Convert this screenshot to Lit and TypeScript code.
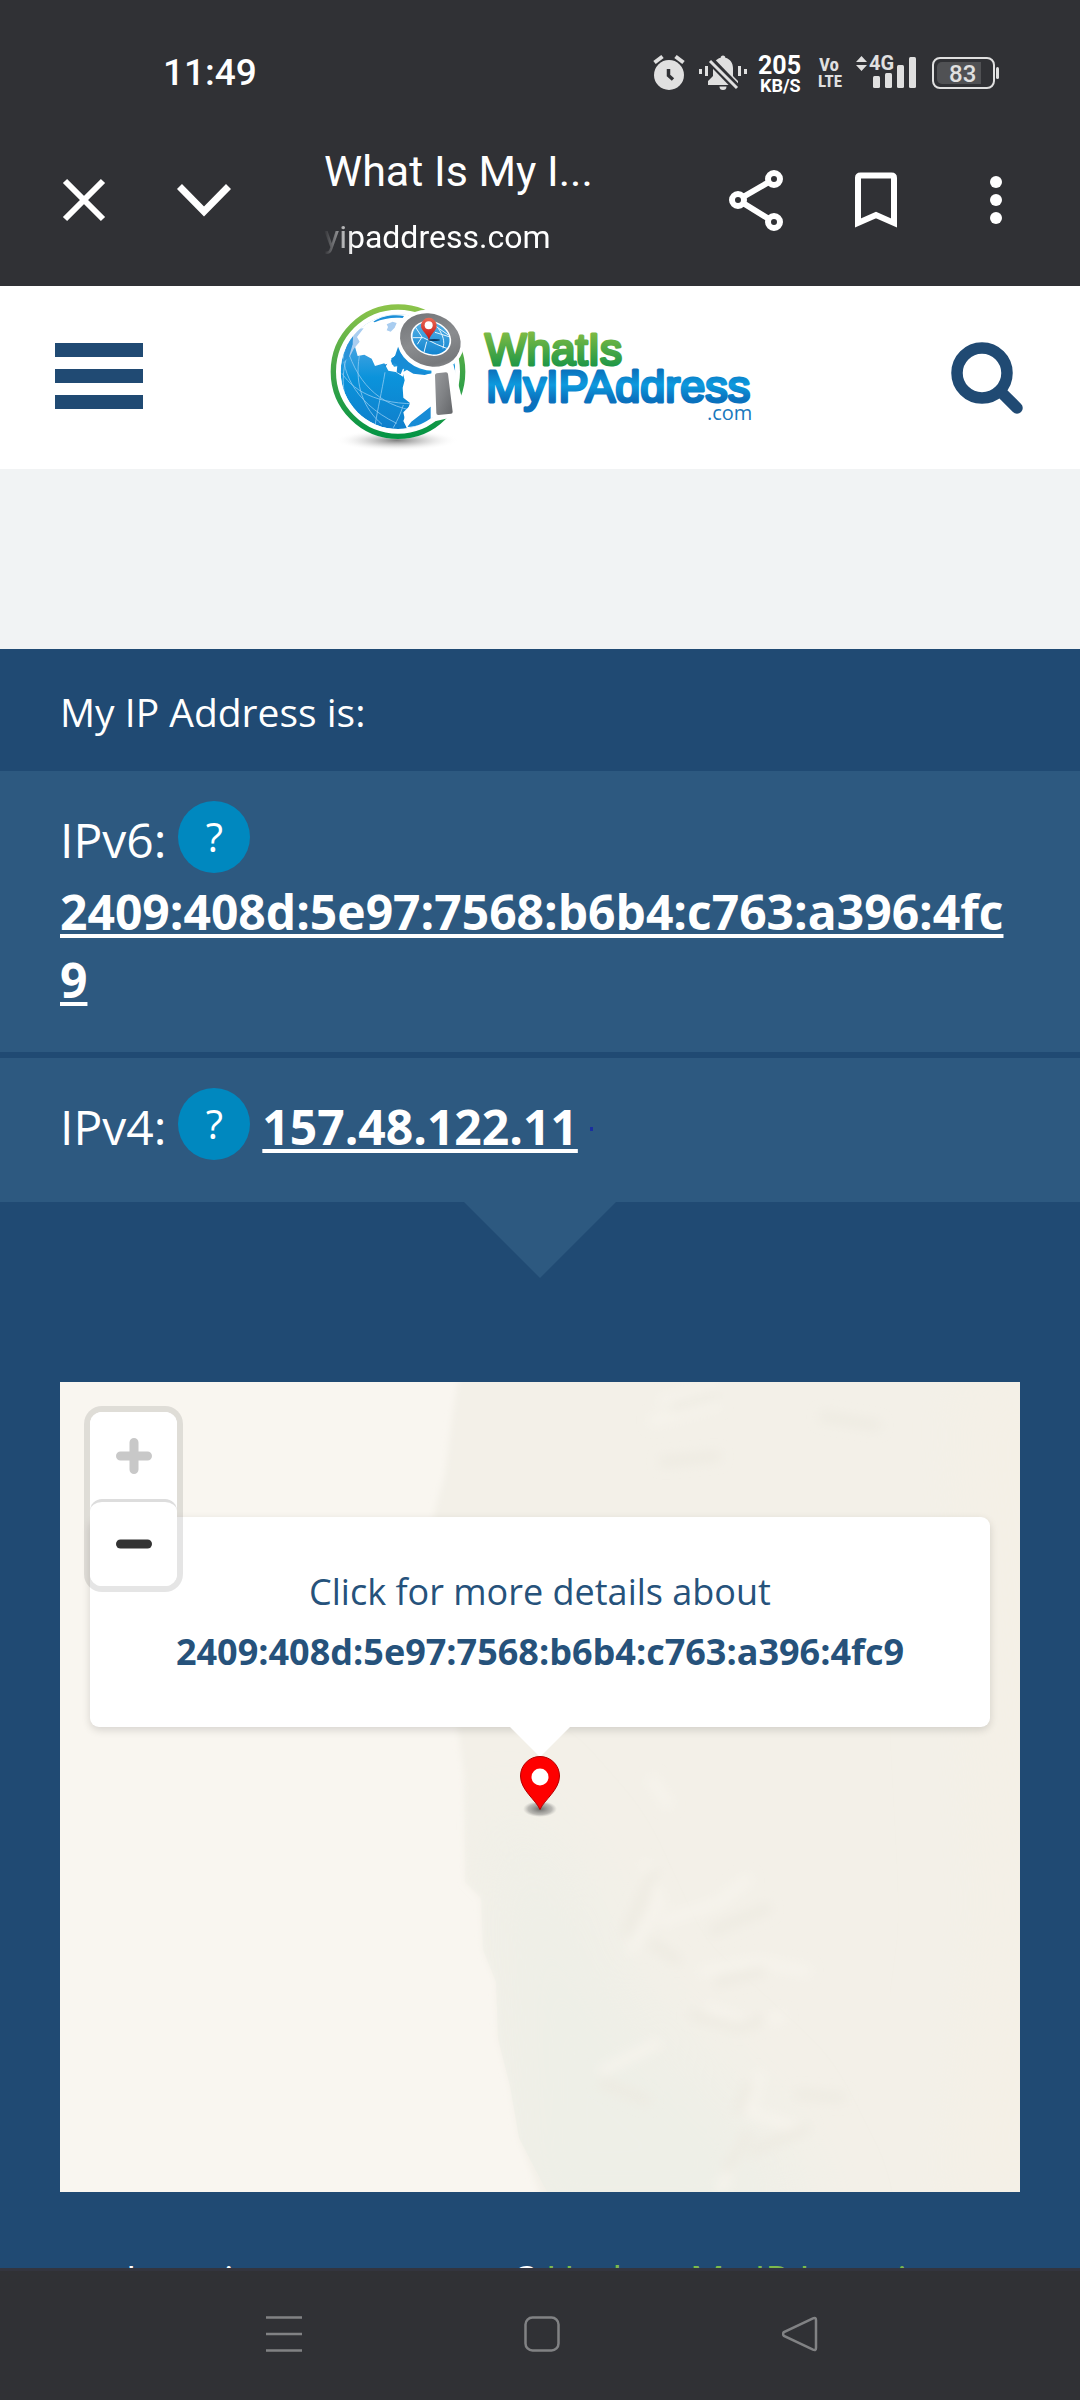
import { LitElement, html, svg, css } from "lit";
import { customElement } from "lit/decorators.js";

const IPV6 = "2409:408d:5e97:7568:b6b4:c763:a396:4fc9";
const IPV4 = "157.48.122.11";

@customElement("status-bar")
class StatusBar extends LitElement {
  static styles = css`
    :host {
      display: flex;
      align-items: flex-start;
      justify-content: space-between;
      box-sizing: border-box;
      height: 116px;
      padding: 52px 80px 0 163px;
      color: #fff;
      font-family: Roboto, sans-serif;
    }
    .time {
      font-size: 37px;
      font-weight: 500;
      line-height: 42px;
    }
    .icons {
      display: block;
      width: 348px;
      height: 48px;
    }
    .rate { font-weight: 700; font-size: 25px; }
    .unit { font-weight: 700; font-size: 18px; }
    .volte { font: 700 19px "Roboto Condensed", "Open Sans Condensed", Roboto, sans-serif; }
    .volte.small { font-size: 17px; }
    .net { font-weight: 700; font-size: 20px; }
    .level { font-weight: 500; font-size: 24px; }
  `;

  render() {
    return html`
      <span class="time">11:49</span>
      <svg class="icons" viewBox="652 52 348 48" fill="#e0e0e0">
        <circle cx="669" cy="75" r="15"></circle>
        <path d="M654.500 62.500l8-6M683.500 62.500l-8-6" stroke="#e0e0e0" stroke-width="4" fill="none"></path>
        <path d="M668.500 69v6.500l4.500 4" stroke="#303135" stroke-width="3.500" fill="none"></path>

        <path d="M723 55.500c1.500 0 2.300 1 2.300 2.200 5 1.300 7.700 5.300 7.700 10.300v8l5 5v4h-30v-4l5-5v-8c0-5 2.700-9 7.700-10.300 0-1.200.8-2.200 2.300-2.200z"></path>
        <path d="M719.500 86.500h7a3.500 3.500 0 0 1-7 0z"></path>
        <path d="M709 59l28 29" stroke="#303135" stroke-width="8"></path>
        <path d="M710 61l27 27" stroke="#e0e0e0" stroke-width="3"></path>
        <path d="M700.500 69v5M706.500 66v10M739.500 66v10M745.500 69v5" stroke="#e0e0e0" stroke-width="3"></path>

        <text class="rate" x="758" y="74" fill="#fff">205</text>
        <text class="unit" x="760" y="92" fill="#fff">KB/S</text>
        <text class="volte" x="819" y="71">Vo</text>
        <text class="volte small" x="818" y="87">LTE</text>

        <path d="M856 62l5.500-6 5.500 6zM856 65l5.500 6 5.500-6z"></path>
        <text class="net" x="869" y="70">4G</text>
        <rect x="873" y="76" width="7" height="12" rx="1.500"></rect>
        <rect x="885" y="73" width="7" height="15" rx="1.500"></rect>
        <rect x="897" y="65" width="7" height="23" rx="1.500"></rect>
        <rect x="909" y="57" width="7" height="31" rx="1.500"></rect>

        <rect x="933" y="58" width="61" height="30" rx="7" fill="none" stroke="#e0e0e0" stroke-width="2"></rect>
        <path d="M942 62h39v22h-39a5 5 0 0 1-5-5v-12a5 5 0 0 1 5-5z" fill="#505154"></path>
        <rect x="996" y="67" width="3" height="12" rx="1.500"></rect>
        <text class="level" x="949" y="82">83</text>
      </svg>
    `;
  }
}

@customElement("browser-bar")
class BrowserBar extends LitElement {
  static styles = css`
    :host {
      display: flex;
      align-items: center;
      box-sizing: border-box;
      height: 170px;
      padding: 0 24px 2px;
      color: #fff;
      font-family: Roboto, sans-serif;
    }
    button {
      display: flex;
      align-items: center;
      justify-content: center;
      flex: none;
      width: 120px;
      height: 120px;
      padding: 0;
      border: 0;
      background: none;
      color: inherit;
    }
    svg {
      width: 72px;
      height: 72px;
      fill: none;
      stroke: currentColor;
      stroke-width: 6;
    }
    .page {
      flex: 1;
      min-width: 0;
      padding: 8px 60px 0;
      white-space: nowrap;
    }
    .title {
      font-size: 43px;
      line-height: 66px;
    }
    .url {
      font-size: 32px;
      line-height: 66px;
      -webkit-mask-image: linear-gradient(90deg, transparent, #000 30px);
      mask-image: linear-gradient(90deg, transparent, #000 30px);
    }
  `;

  render() {
    return html`
      <button aria-label="Close">
        <svg viewBox="0 0 72 72"><path d="M17 17l38 38M55 17l-38 38"></path></svg>
      </button>
      <button aria-label="Minimize">
        <svg viewBox="0 0 72 72"><path d="M11.500 22.500L36 47.500 60.500 22.500" stroke-width="7"></path></svg>
      </button>
      <div class="page">
        <div class="title">What Is My I...</div>
        <div class="url">yipaddress.com</div>
      </div>
      <button aria-label="Share">
        <svg viewBox="0 0 72 72">
          <circle cx="18" cy="36" r="6"></circle>
          <circle cx="54" cy="15" r="6"></circle>
          <circle cx="54" cy="58" r="6"></circle>
          <path d="M23 33l26-15M23 39l26 16"></path>
        </svg>
      </button>
      <button aria-label="Bookmark">
        <svg viewBox="0 0 72 72">
          <path d="M18 59V14q0-2.500 2.500-2.500h31q2.500 0 2.500 2.500v45L36 51z"></path>
        </svg>
      </button>
      <button aria-label="More options">
        <svg viewBox="0 0 72 72">
          <g fill="currentColor" stroke="none">
            <circle cx="36" cy="18" r="6"></circle>
            <circle cx="36" cy="36" r="6"></circle>
            <circle cx="36" cy="54" r="6"></circle>
          </g>
        </svg>
      </button>
    `;
  }
}

/* Globe with a magnifier, drawn on a 480 unit square. */
const globe = svg`
  <g transform="scale(.33333)">
    <ellipse cx="230" cy="436" rx="185" ry="32" fill="url(#shade)"></ellipse>
    <circle cx="234" cy="230" r="202" fill="#fff"></circle>
    <circle cx="234" cy="230" r="194" fill="none" stroke="url(#ring)" stroke-width="16"></circle>
    <clipPath id="ball"><circle cx="234" cy="230" r="172"></circle></clipPath>
    <g clip-path="url(#ball)">
      <circle cx="234" cy="230" r="172" fill="url(#sea)"></circle>
      <path d="M72 150C60 215 95 320 230 385M88 180c40 110 120 170 250 172M118 183c-15 90 15 160 68 205M195 232c-10 60-22 110-30 160M66 235c40 60 120 100 270 90M100 130c-30 70-40 130-20 190M250 330c-10 30-15 40-30 68" fill="none" stroke="#8cc9f0" stroke-width="2.500"></path>
      <path d="M60 60L105 155l8 28 20-4 22 12 10 22 28-8 12 22 22 4 22 14 3-22-16-10-14 2-10-18 12-14 22-4 14 6 8-14-2-60V40z" fill="#fff"></path>
      <path d="M85 130l22-28 24-2-20 26 8 14-18 22-12 24-12-18z" fill="#a9cdf0"></path>
      <path d="M100 108l-18 34-14 60 18-14 12-40z" fill="#2b93d8"></path>
      <path d="M160 80c28-18 62-22 92-17l-4 6c-28-3-58 1-84 13z" fill="#1c8fd8"></path>
      <path d="M200 88l18-8 12 4-6 14-12 12-12-4 4-10z" fill="#a9cdf0"></path>
      <path d="M248 232l14-8 22 4 40 8 90-10v180h-150l-14-28 14-36 6-18-20-16-2-30 6-22z" fill="#fff"></path>
      <path d="M236 150l14 38 50 38 34 8-20 6-34-4-30-18-8 20-12-6 2-22-16-10 10-20z" fill="#178cd6"></path>
      <path d="M214 190l14-8 12 12-14 8-10 8zM190 210l12-4-6 10z" fill="#178cd6"></path>
      <path d="M262 396c8-22 26-36 40-40l30-22v36c-20 16-42 26-70 26z" fill="#178cd6"></path>
      <path d="M250 352l16-16 26-40 36-50 10 84-30 24-34 26-14 18z" fill="#fff"></path>
    </g>
    <path d="M334 218l66-10 38 150-100 22z" fill="#fff"></path>
    <ellipse cx="331" cy="136" rx="103" ry="90" transform="rotate(20 331 136)" fill="#fff"></ellipse>
    <ellipse cx="331" cy="135" rx="93" ry="78" transform="rotate(22 331 135)" fill="url(#metal)"></ellipse>
    <ellipse cx="333" cy="130" rx="62" ry="51" transform="rotate(22 333 130)" fill="#fff"></ellipse>
    <clipPath id="glass"><ellipse cx="333" cy="130" rx="57" ry="47" transform="rotate(22 333 130)"></ellipse></clipPath>
    <g clip-path="url(#glass)">
      <rect x="270" y="70" width="130" height="120" fill="url(#sea2)"></rect>
      <path d="M270 128h40l40 20 35 14M345 92l40 28M385 155l-14 34M345 112l45 14M286 96l20 30-14 22M355 100c14 20 20 40 14 60M320 140l-10 40" fill="none" stroke="#e6f4fd" stroke-width="3"></path>
    </g>
    <ellipse cx="342" cy="135" rx="18" ry="3" fill="#0b3c66"></ellipse>
    <path d="M327 136c-4-20-24-28-24-44a23 23 0 0 1 47 0c0 16-19 24-23 44z" fill="url(#pin)"></path>
    <circle cx="326" cy="91" r="12" fill="#fff"></circle>
    <path d="M350 235l28-3q5 0 6 5l14 113q0 6-5 6l-38 4q-6 0-6-6l-4-113q0-5 5-6z" fill="url(#bar)"></path>
  </g>
`;

@customElement("site-header")
class SiteHeader extends LitElement {
  static styles = css`
    :host {
      display: grid;
      grid-template-columns: 1fr auto 1fr;
      align-items: center;
      height: 183px;
      padding: 0 55px;
      background: #fff;
    }
    button {
      display: flex;
      padding: 0;
      border: 0;
      background: none;
      color: #204a73;
    }
    .menu { justify-self: start; padding-bottom: 4px; }
    .menu svg { width: 88px; height: 66px; }
    .search { justify-self: end; }
    .search svg { width: 76px; height: 76px; }
    .logo { display: block; width: 440px; height: 165px; }
    .logo svg { display: block; width: 100%; height: 100%; }
    .word {
      font: 44px "Liberation Sans", Arial, sans-serif;
      stroke-width: 3;
      stroke-linejoin: round;
      stroke-linecap: round;
    }
    .word.wide { font-size: 45px; }
    .tld { font: 20px "Open Sans", sans-serif; }
  `;

  render() {
    return html`
      <button class="menu" aria-label="Menu">
        <svg viewBox="0 0 88 66" fill="currentColor">
          <path d="M0 0h88v14H0zM0 26h88v14H0zM0 52h88v14H0z"></path>
        </svg>
      </button>
      <a class="logo" href="#" aria-label="WhatIsMyIPAddress.com">
        <svg viewBox="0 0 440 165">
          <defs>
            <linearGradient id="ring" x1="0" y1="0" x2="0" y2="1">
              <stop offset="0" stop-color="#8bc34a"></stop>
              <stop offset=".5" stop-color="#3fa548"></stop>
              <stop offset="1" stop-color="#049444"></stop>
            </linearGradient>
            <linearGradient id="sea" x1="0" y1="0" x2="0" y2="1">
              <stop offset=".25" stop-color="#4aa5e2"></stop>
              <stop offset=".55" stop-color="#0b93db"></stop>
              <stop offset="1" stop-color="#0f7fcc"></stop>
            </linearGradient>
            <linearGradient id="sea2" x1="0" y1="0" x2="0" y2="1">
              <stop offset="0" stop-color="#5db7ea"></stop>
              <stop offset="1" stop-color="#0b7fcc"></stop>
            </linearGradient>
            <linearGradient id="metal" x1="0" y1="0" x2="1" y2="1">
              <stop offset="0" stop-color="#6e7073"></stop>
              <stop offset=".5" stop-color="#8a8c8f"></stop>
              <stop offset=".8" stop-color="#77797c"></stop>
              <stop offset="1" stop-color="#9b9da0"></stop>
            </linearGradient>
            <linearGradient id="bar" x1="0" y1="0" x2="1" y2="1">
              <stop offset="0" stop-color="#97999c"></stop>
              <stop offset=".5" stop-color="#808285"></stop>
              <stop offset="1" stop-color="#636568"></stop>
            </linearGradient>
            <linearGradient id="pin" x1="0" y1="0" x2="0" y2="1">
              <stop offset="0" stop-color="#ec6a55"></stop>
              <stop offset="1" stop-color="#c01010"></stop>
            </linearGradient>
            <radialGradient id="shade">
              <stop offset="0" stop-color="#555" stop-opacity=".75"></stop>
              <stop offset=".5" stop-color="#888" stop-opacity=".3"></stop>
              <stop offset="1" stop-color="#fff" stop-opacity="0"></stop>
            </radialGradient>
            <linearGradient id="green" gradientUnits="userSpaceOnUse" x1="0" y1="38" x2="0" y2="72">
              <stop offset="0" stop-color="#7cba44"></stop>
              <stop offset="1" stop-color="#1c9647"></stop>
            </linearGradient>
            <linearGradient id="blue" gradientUnits="userSpaceOnUse" x1="0" y1="74" x2="0" y2="112">
              <stop offset="0" stop-color="#0b6fba"></stop>
              <stop offset=".42" stop-color="#0d9ade"></stop>
              <stop offset=".8" stop-color="#0a71bd"></stop>
            </linearGradient>
          </defs>
          ${globe}
          <text class="word" x="165" y="70" fill="url(#green)" stroke="url(#green)">WhatIs</text>
          <text class="word wide" x="166" y="107" fill="url(#blue)" stroke="url(#blue)">MyIPAddress</text>
          <text class="tld" x="387" y="125" fill="#1878bd">.com</text>
        </svg>
      </a>
      <button class="search" aria-label="Search">
        <svg viewBox="0 0 76 76" fill="none" stroke="currentColor">
          <circle cx="33" cy="33" r="25" stroke-width="11.500"></circle>
          <path d="M53 53l15 15" stroke-width="11.500" stroke-linecap="round"></path>
        </svg>
      </button>
    `;
  }
}

@customElement("ip-panel")
class IpPanel extends LitElement {
  static styles = css`
    :host { display: block; color: #fff; }
    h1 {
      margin: 0;
      padding: 34px 60px 30px;
      font-size: 39px;
      font-weight: 400;
      line-height: 58px;
    }
    .list { display: grid; gap: 6px; }
    .item {
      display: flex;
      flex-wrap: wrap;
      align-items: flex-start;
      column-gap: 12px;
      padding: 30px 60px 38px;
      background: #2d5980;
      font-size: 48px;
      line-height: 68px;
    }
    .label { padding: 5px 0 3px; }
    .help {
      width: 72px;
      height: 72px;
      padding: 0;
      border: 0;
      border-radius: 50%;
      background: #0088bf;
      color: inherit;
      font: 40px/70px "Open Sans", sans-serif;
    }
    .ip {
      padding-top: 5px;
      color: inherit;
      font-weight: 700;
      overflow-wrap: anywhere;
      text-decoration: underline;
      text-decoration-thickness: 4px;
      text-underline-offset: 4px;
    }
    .ip.long { padding-top: 1px; }
    .tick {
      align-self: center;
      width: 3px;
      height: 4px;
      margin-top: 6px;
      background: #1a2fa0;
    }
    .pointer {
      width: 152px;
      height: 76px;
      margin: 0 auto;
      background: #2d5980;
      clip-path: polygon(0 0, 100% 0, 50% 100%);
    }
  `;

  render() {
    return html`
      <h1>My IP Address is:</h1>
      <div class="list">
        <div class="item">
          <span class="label">IPv6:</span>
          <button class="help" aria-label="About IPv6">?</button>
          <a class="ip long" href="#">${IPV6}</a>
        </div>
        <div class="item">
          <span class="label">IPv4:</span>
          <button class="help" aria-label="About IPv4">?</button>
          <a class="ip" href="#">${IPV4}</a>
          <span class="tick"></span>
        </div>
      </div>
      <div class="pointer"></div>
    `;
  }
}

@customElement("location-map")
class LocationMap extends LitElement {
  static styles = css`
    :host {
      display: block;
      position: relative;
      height: 810px;
      overflow: hidden;
      background: #f9f6f0;
    }
    .terrain {
      display: block;
      width: 100%;
      height: 100%;
    }
    .popup {
      position: absolute;
      top: 135px;
      left: 30px;
      right: 30px;
      padding: 45px 30px;
      border-radius: 9px;
      background: #fff;
      box-shadow: 0 3px 9px rgba(0, 0, 0, 0.14);
      color: #26527b;
      font-size: 36px;
      line-height: 60px;
      text-align: center;
      text-decoration: none;
    }
    .popup strong { display: block; }
    .popup::after {
      content: "";
      position: absolute;
      top: 100%;
      left: 50%;
      width: 60px;
      height: 30px;
      margin-left: -30px;
      background: #fff;
      clip-path: polygon(0 0, 100% 0, 50% 100%);
    }
    .marker {
      position: absolute;
      top: 373px;
      left: 50%;
      width: 42px;
      height: 64px;
      margin-left: -21px;
    }
    .zoom {
      position: absolute;
      top: 24px;
      left: 24px;
      display: grid;
      border: 6px solid rgba(0, 0, 0, 0.1);
      border-radius: 18px;
      background: #fff;
      background-clip: padding-box;
    }
    .zoom button {
      display: block;
      width: 87px;
      height: 87px;
      padding: 0;
      border: 0;
      border-radius: 12px;
      background: #fff;
      color: #333;
    }
    .zoom button + button { border-top: 3px solid #ddd; }
    .zoom .off { color: #c8c8c8; }
    .zoom svg {
      display: block;
      width: 36px;
      height: 36px;
      margin: 0 auto;
      stroke: currentColor;
      stroke-width: 9;
      stroke-linecap: round;
    }
  `;

  render() {
    return html`
      <svg class="terrain" viewBox="0 0 960 810" preserveAspectRatio="xMidYMid slice" aria-hidden="true">
        <defs>
          <filter id="soft"><feGaussianBlur stdDeviation="3"></feGaussianBlur></filter>
          <filter id="relief"><feGaussianBlur stdDeviation="6"></feGaussianBlur></filter>
          <filter id="haze" x="-50%" y="-50%" width="200%" height="200%"><feGaussianBlur stdDeviation="38"></feGaussianBlur></filter>
          <clipPath id="land">
            <path d="M401 0L392 35 385 92 374 131 380 240 398 348 404 395 405 500 421 516 423 568 436 600 438 657 450 704 459 756 487 810H960V0z"></path>
          </clipPath>
        </defs>
        <path filter="url(#soft)" fill="#f3f0e8" d="M401-20L392 35 385 92 374 131 380 240 398 348 404 395 405 500 421 516 423 568 436 600 438 657 450 704 459 756 487 830H1000V-20z"></path>
        <g clip-path="url(#land)">
          <path filter="url(#haze)" fill="#eeefe7" d="M430 400l80 90 60 130 130 120 60 120H440z"></path>
          <path filter="url(#haze)" fill="#f4f0e6" d="M900-20h110v860H890l40-300z"></path>
          <g filter="url(#relief)" fill="none" stroke-width="9">
            <path stroke="#f7f4ed" d="M600 20l60-14M590 40l70-20M590 395l20 30M585 480l15 40-30 50M600 540l60-20 30-25M640 590l60-10 50 10M645 625l40 15 40-5M700 690l-10 40 60 20M680 760l-20 50M540 690l60-30"></path>
            <path stroke="#edeae1" d="M610 26l50-14M760 34l60 10M600 80l60-6M595 488l-30 66M590 560l30 20M650 550l60-25M655 600l50-12M630 632l50 14 25-10M690 700l-12 30M735 712l50 4M690 770l60-25M665 790l24-40M540 700l50 20"></path>
          </g>
        </g>
      </svg>
      <a class="popup" href="#">
        Click for more details about
        <strong>${IPV6}</strong>
      </a>
      <svg class="marker" viewBox="0 0 42 64" aria-hidden="true">
        <defs>
          <radialGradient id="drop">
            <stop offset="0" stop-color="#333" stop-opacity=".7"></stop>
            <stop offset=".7" stop-color="#666" stop-opacity=".4"></stop>
            <stop offset="1" stop-color="#888" stop-opacity="0"></stop>
          </radialGradient>
        </defs>
        <ellipse cx="21" cy="54" rx="17" ry="8" fill="url(#drop)"></ellipse>
        <path d="M21 54.500C17 45 1.500 35 1.500 21a19.500 19.500 0 0 1 39 0C40.500 35 25 45 21 54.500z" fill="#fe0000" stroke="#b30000"></path>
        <circle cx="21" cy="22" r="8.500" fill="#fff"></circle>
      </svg>
      <div class="zoom">
        <button class="off" aria-label="Zoom in">
          <svg viewBox="0 0 36 36"><path d="M4.500 18h27M18 4.500v27"></path></svg>
        </button>
        <button aria-label="Zoom out">
          <svg viewBox="0 0 36 36"><path d="M4.500 18h27"></path></svg>
        </button>
      </div>
    `;
  }
}

@customElement("nav-bar")
class NavBar extends LitElement {
  static styles = css`
    :host {
      display: grid;
      grid-template-columns: repeat(3, 1fr);
      flex: none;
      box-sizing: border-box;
      height: 132px;
      padding: 0 151px 0 155px;
      border-top: 3px solid #33353f;
      background: #303135;
    }
    button {
      display: flex;
      align-items: center;
      justify-content: center;
      padding: 0 0 3px;
      border: 0;
      background: none;
      color: #818284;
    }
    svg {
      width: 36px;
      height: 36px;
      fill: none;
      stroke: currentColor;
      stroke-width: 2.5;
    }
  `;

  render() {
    return html`
      <button aria-label="Recent apps">
        <svg viewBox="0 0 36 36"><path d="M0 1.500h36M0 18h36M0 34.500h36"></path></svg>
      </button>
      <button aria-label="Home">
        <svg viewBox="0 0 36 36"><rect x="1.500" y="1.500" width="33" height="33" rx="7"></rect></svg>
      </button>
      <button aria-label="Back">
        <svg viewBox="0 0 36 36"><path d="M31 2.300L2 16q-2 2 0 4l29 13.700q3 1.300 3-2v-27.400q0-3.300-3-2z"></path></svg>
      </button>
    `;
  }
}

@customElement("app-root")
class AppRoot extends LitElement {
  static styles = css`
    :host {
      display: flex;
      flex-direction: column;
      height: 100vh;
      background: #303135;
      font-family: "Open Sans", sans-serif;
    }
    .chrome { flex: none; background: #303135; }
    .web {
      flex: 1;
      min-height: 0;
      overflow: hidden;
      background: #204a73;
    }
    .banner { height: 180px; background: #f1f3f4; }
    .map { padding: 104px 60px 58px; }
    .note {
      margin: 0;
      padding: 0 60px;
      color: #fff;
      font-size: 39px;
      line-height: 58px;
      text-align: center;
    }
    .note a { color: #7dba4c; text-decoration: none; }
  `;

  render() {
    return html`
      <header class="chrome">
        <status-bar></status-bar>
        <browser-bar></browser-bar>
      </header>
      <main class="web">
        <site-header></site-header>
        <div class="banner"></div>
        <ip-panel></ip-panel>
        <div class="map"><location-map></location-map></div>
        <p class="note">Location not accurate? <a href="#">Update My IP Location</a></p>
      </main>
      <nav-bar></nav-bar>
    `;
  }
}
